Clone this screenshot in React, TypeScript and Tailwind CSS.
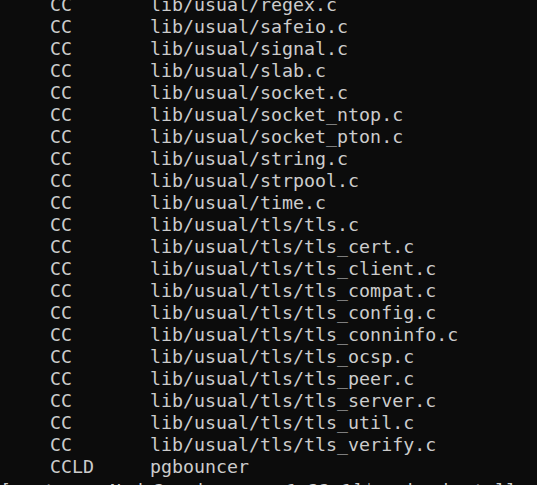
const files = [
  "regex.c",
  "safeio.c",
  "signal.c",
  "slab.c",
  "socket.c",
  "socket_ntop.c",
  "socket_pton.c",
  "string.c",
  "strpool.c",
  "time.c",
  "tls/tls.c",
  "tls/tls_cert.c",
  "tls/tls_client.c",
  "tls/tls_compat.c",
  "tls/tls_config.c",
  "tls/tls_conninfo.c",
  "tls/tls_ocsp.c",
  "tls/tls_peer.c",
  "tls/tls_server.c",
  "tls/tls_util.c",
  "tls/tls_verify.c",
];

function BuildLine({ step, target }: { step: string; target: string }) {
  return (
    <div className="flex pl-[50px]">
      <span className="w-[100px] shrink-0">{step}</span>
      <span>{target}</span>
    </div>
  );
}

export default function App() {
  return (
    <div className="h-screen overflow-hidden bg-[#0c0c0c]">
      <div className="mt-[-6px] whitespace-pre font-['DejaVu_Sans_Mono',monospace] text-[18.3px] leading-[22px] text-[#cccccc]">
        {files.map((f) => (
          <BuildLine key={f} step="CC" target={`lib/usual/${f}`} />
        ))}
        <BuildLine step="CCLD" target="pgbouncer" />
        <div className="mt-[2px]">[postgres@Nodo2 pgbouncer-1.22.1]$ make install</div>
      </div>
    </div>
  );
}
